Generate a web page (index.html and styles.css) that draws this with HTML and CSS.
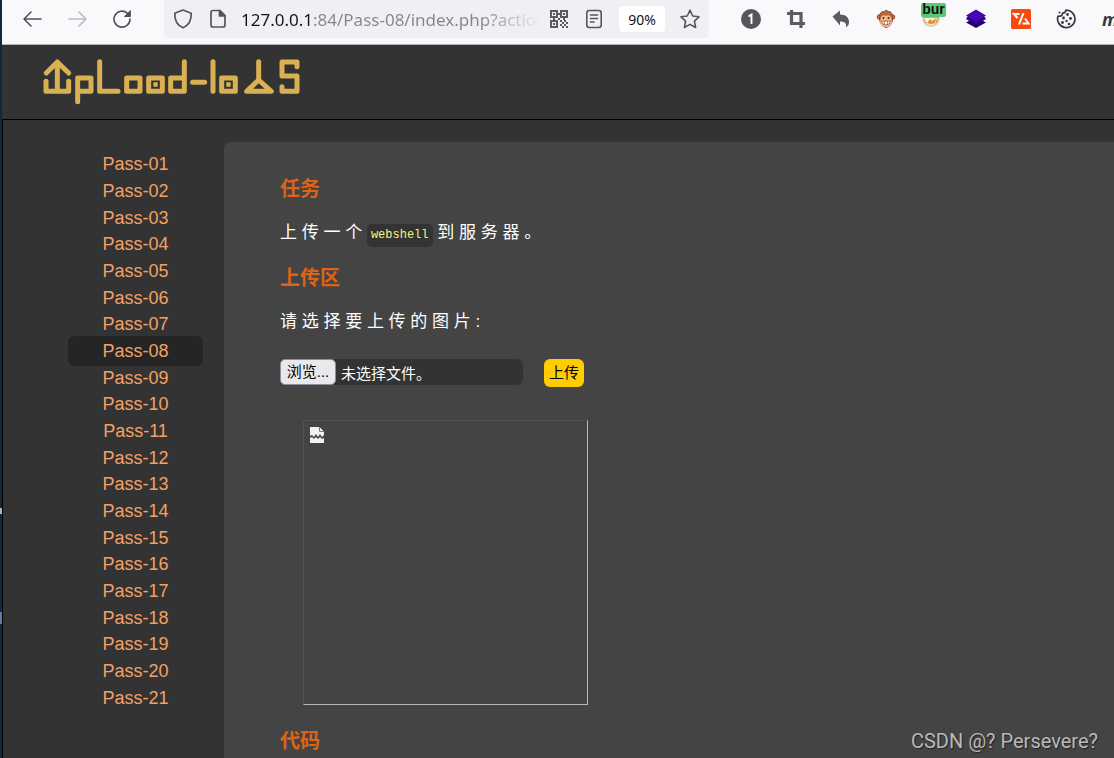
FILE: index.html
```html
<!DOCTYPE html>
<html lang="zh-CN">
<head>
<meta charset="utf-8">
<title>upload-labs</title>
<link rel="stylesheet" href="styles.css">
</head>
<body>
<div class="desktop-edge" aria-hidden="true"><span class="edge-mark edge-light"></span><span class="edge-mark edge-blue"></span></div>
<div class="window">
  <div class="toolbar">
    <div class="tool-group">
      <button class="tool" aria-label="后退"><svg width="20" height="20" viewBox="0 0 20 20" fill="none" stroke="#4f4f58" stroke-width="1.5" stroke-linecap="round" stroke-linejoin="round"><path d="M18 10H1M8 3l-7 7 7 7"/></svg></button>
      <button class="tool" aria-label="前进"><svg width="20" height="20" viewBox="0 0 20 20" fill="none" stroke="#b9b9be" stroke-width="1.5" stroke-linecap="round" stroke-linejoin="round"><path d="M1 10h17M11 3l7 7-7 7"/></svg></button>
      <button class="tool" aria-label="刷新"><svg width="20" height="20" viewBox="0 0 20 20" fill="none" stroke="#4f4f58" stroke-width="1.6" stroke-linecap="round"><path d="M17 10A8 8 0 1 1 14.500 4.300"/><path d="M17.400 2V7.500h-5.500z" fill="#4f4f58" stroke-width="1" stroke-linejoin="round"/></svg></button>
    </div>
    <div class="address">
      <svg width="20" height="20" viewBox="0 0 20 20" fill="none" stroke="#55555e" stroke-width="1.7" stroke-linejoin="round"><path d="M10 1L18.2 4.2C18.5 10.5 16.3 16 10 18.8 3.700 16 1.500 10.500 1.800 4.200z"/></svg>
      <svg width="20" height="20" viewBox="0 0 20 20" fill="none" stroke="#55555e" stroke-width="1.7" stroke-linejoin="round"><path d="M5 1.500h7l5 5v9.500q0 2-2 2H5q-2 0-2-2V3.500q0-2 2-2z"/><path d="M11.500 1.500v5.500H17z" fill="#55555e"/></svg>
      <input class="url" type="text" aria-label="地址" value="127.0.0.1:84/Pass-08/index.php?action=show_code">
      <svg width="20" height="20" viewBox="0 0 20 20" fill="#5b5b63"><path fill-rule="evenodd" d="M1 1h8v8H1zM3 3v4h4V3zM11 1h8v8h-8zM13 3v4h4V3zM1 11h8v8H1zM3 13v4h4v-4z"/><path d="M4 4h2v2H4zM14 4h2v2h-2zM4 14h2v2H4zM11 11h2v2h-2zM15 11h2v2h-2zM13 13h2v2h-2zM17 13h2v2h-2zM11 15h2v2h-2zM15 15h2v2h-2zM13 17h2v2h-2zM17 17h2v2h-2zM9 4h2v2H9zM4 9h2v2H4zM9 9h2v2H9zM14 9h2v2h-2z"/></svg>
      <svg width="20" height="20" viewBox="0 0 20 20" fill="none" stroke="#55555e" stroke-width="1.600" stroke-linecap="round"><rect x="2.800" y="1.500" width="14.400" height="17" rx="2.500"/><path d="M6.500 6h7M6.500 9.500h7M6.500 13h3.500"/></svg>
      <button class="zoom-level">90%</button>
      <button class="star" aria-label="收藏"><svg width="20" height="20" viewBox="0 0 20 20" fill="none" stroke="#55555e" stroke-width="1.600" stroke-linejoin="round"><path d="M10 1.200l2.700 5.800 6.300.8-4.600 4.400 1.200 6.300L10 15.400l-5.600 3.100 1.200-6.300L1 7.800 7.300 7z"/></svg></button>
    </div>
    <div class="tool-group extensions">
      <button class="tool" aria-label="通知"><svg width="20" height="20" viewBox="0 0 20 20"><circle cx="10" cy="10" r="10" fill="#55555e"/><path d="M7.500 7.500L10.500 5.500V15" fill="none" stroke="#fff" stroke-width="1.900"/></svg></button>
      <button class="tool" aria-label="截图"><svg width="20" height="20" viewBox="0 0 20 20" fill="none" stroke="#5b5b63" stroke-width="3.200"><path d="M1 4.500h14V15M5.500 1v13.500H19M15 12v7"/></svg></button>
      <button class="tool" aria-label="撤销"><svg width="20" height="20" viewBox="0 0 20 20" fill="#5b5b63"><path d="M1.500 7.500L9 1.500v4c6 0 9 3.500 9 7.500 0 2.500-1 4-3 5.500.8-4-1-6-6-6v4z"/></svg></button>
      <button class="tool" aria-label="脚本"><svg width="20" height="20" viewBox="0 0 20 20"><circle cx="3.500" cy="8" r="2.300" fill="#c97a50" stroke="#8c4a2b"/><circle cx="16.500" cy="8" r="2.300" fill="#c97a50" stroke="#8c4a2b"/><path d="M4 5Q5 2 8.500 2.500L10 1 12 2.500Q15.500 2 16 6q2 11-6 12.500Q2 17 4 5z" fill="#c0663c" stroke="#8c4a2b"/><path d="M5 8q2.500-3 5-1 2.500-2 5 1l1 6q-1.500 4-6 4t-6-4z" fill="#f7bd8d"/><path d="M5.500 12h9q-.5 4-4.500 4t-4.500-4z" fill="#fff" stroke="#8c4a2b" stroke-width=".8"/><path d="M8.500 12v4M11.500 12v4" stroke="#8c4a2b" stroke-width=".6"/><circle cx="7.500" cy="9" r="1" fill="#40251b"/><circle cx="12.500" cy="9" r="1" fill="#40251b"/></svg></button>
      <button class="tool badge-host" aria-label="代理 bur"><svg width="20" height="20" viewBox="0 0 20 20"><circle cx="10" cy="9" r="9" fill="#d8d0bd"/><path d="M2 7l4 1 4-2 5 2 3-2-2 8q-6 4-12 0z" fill="#e0a052"/><path d="M3 9h13l-2 6q-4 2-8 0z" fill="#fff4df"/><path d="M6 14l3-4 2 2 4-3-1 5q-4 2-8 0z" fill="#e8902f"/></svg><span class="badge">bur</span></button>
      <button class="tool" aria-label="图层"><svg width="22" height="20" viewBox="0 0 22 20"><path d="M1 13.500L11 8l10 5.500L11 19z" fill="#23006b"/><path d="M1 10l2-3h16l2 3-10 6z" fill="#31008d"/><path d="M1 6.500L11 .5l10 6-10 6z" fill="#4509b4"/></svg></button>
      <button class="tool" aria-label="代码"><svg width="20" height="20" viewBox="0 0 20 20"><rect width="20" height="20" rx="1.500" fill="#f64a0e"/><path d="M8.500 5H3l3.500 4M12.500 4L8 15.500M14 9.500l3.500 5h-6" fill="none" stroke="#fff" stroke-width="2"/></svg></button>
      <button class="tool" aria-label="Cookie"><svg width="20" height="20" viewBox="0 0 20 20"><path d="M10 1.200q-.5 3-3.500 3-.2 3.500-4.500 3A8.700 8.700 0 1 0 10 1.200z" fill="none" stroke="#38383d" stroke-width="1.700" stroke-linejoin="round"/><g fill="#38383d"><circle cx="3.500" cy="3.500" r="1"/><circle cx="11.500" cy="5.500" r="1.400"/><circle cx="7.500" cy="9" r="1.400"/><circle cx="14.500" cy="9.500" r="1.400"/><circle cx="6.500" cy="13.500" r="1.400"/><circle cx="10.500" cy="12" r="1.200"/><circle cx="13" cy="15" r="1.300"/></g></svg></button>
      <button class="tool letter" aria-label="m">m</button>
    </div>
  </div>

  <header class="site-header">
    <svg class="logo" role="img" aria-label="upload-labs" width="258" height="47" viewBox="40 25 774 141" fill="none" stroke="#d9b152" stroke-width="15" stroke-linecap="round" stroke-linejoin="round">
      <path d="M83 37V125M50 70L83 37l34 33M49 95v30h68V95"/>
      <path d="M144 156V85h40v40h-40"/>
      <path d="M210 36v89h55"/>
      <path d="M291 85h40v40h-40zM357 85h41v40h-41zM464 36v89h-41V85h41"/>
      <path d="M489 98h36M550 36v89"/>
      <path d="M576 85h41v40h-41z"/>
      <path d="M687 36v52"/>
      <path d="M651 125l36-34 38 34z"/>
      <path d="M802 51V37h-45v42h45v46h-45v-14"/>
      <path d="M371 98h13v13h-13zM590 98h13v13h-13z" fill="#d9b152" stroke="none"/>
    </svg>
  </header>

  <div class="site-body">
    <nav class="menu" aria-label="关卡">
      <ul class="menu-list">
        <li><a href="#1">Pass-01</a></li>
        <li><a href="#2">Pass-02</a></li>
        <li><a href="#3">Pass-03</a></li>
        <li><a href="#4">Pass-04</a></li>
        <li><a href="#5">Pass-05</a></li>
        <li><a href="#6">Pass-06</a></li>
        <li><a href="#7">Pass-07</a></li>
        <li class="active"><a href="#8" aria-current="page">Pass-08</a></li>
        <li><a href="#9">Pass-09</a></li>
        <li><a href="#10">Pass-10</a></li>
        <li><a href="#11">Pass-11</a></li>
        <li><a href="#12">Pass-12</a></li>
        <li><a href="#13">Pass-13</a></li>
        <li><a href="#14">Pass-14</a></li>
        <li><a href="#15">Pass-15</a></li>
        <li><a href="#16">Pass-16</a></li>
        <li><a href="#17">Pass-17</a></li>
        <li><a href="#18">Pass-18</a></li>
        <li><a href="#19">Pass-19</a></li>
        <li><a href="#20">Pass-20</a></li>
        <li><a href="#21">Pass-21</a></li>
      </ul>
    </nav>
    <main class="panel">
      <h3>任务</h3>
      <p>上 传 一 个 <code>webshell</code> 到 服 务 器 。</p>
      <h3>上传区</h3>
      <p id="upload-label">请 选 择 要 上 传 的 图 片 :</p>
      <form class="upload-form">
        <label class="file-field">
          <input class="file-input" type="file" aria-labelledby="upload-label">
          <span class="browse">浏览...</span>
          <span>未选择文件。</span>
        </label>
        <button class="submit" type="button">上传</button>
      </form>
      <div class="preview" role="img" aria-label="预览">
        <svg width="14" height="16" viewBox="0 0 14 16"><path d="M0 0h9.500L14 4.500V8l-2 2-2-3-2 3-2-3-2 3-2-2-2 1z" fill="#f2f2f2"/><path d="M9.500 0v4.500H14" fill="none" stroke="#777"/><path d="M0 11l2-1 2 2 2-2 2 2 2-2 2 2 2-1v5H0z" fill="#f2f2f2"/></svg>
      </div>
      <h3>代码</h3>
    </main>
  </div>
  <div class="watermark">CSDN @? Persevere?</div>
</div>
</body>
</html>
```
FILE: styles.css
```css
* {
  box-sizing: border-box;
}

body {
  margin: 0;
  height: 100vh;
  display: flex;
  overflow: hidden;
  background: #333;
  color: #fff;
  font-family: "Liberation Sans", "Noto Sans CJK SC", sans-serif;
}

button {
  border: 0;
  padding: 0;
  background: none;
  font: inherit;
  color: inherit;
}

svg {
  display: block;
  flex: none;
}

.desktop-edge {
  position: relative;
  flex: none;
  width: 2px;
  background: #15283b;
}

.edge-mark {
  position: absolute;
  left: 0;
  width: 2px;
}

.edge-light {
  top: 508px;
  height: 6px;
  background: #b5b5a8;
}

.edge-blue {
  top: 612px;
  height: 12px;
  background: #5f7cab;
}

.window {
  position: relative;
  flex: 1;
  min-width: 0;
  display: flex;
  flex-direction: column;
}

/* Browser toolbar */
.toolbar {
  flex: none;
  height: 45px;
  display: flex;
  padding-left: 8px;
  background: #f9f9fb;
  border-bottom: 1px solid #b8b8bc;
}

.tool-group {
  flex: none;
  display: flex;
  height: 38px;
}

.tool {
  flex: none;
  width: 45px;
  display: flex;
  align-items: center;
  justify-content: center;
}

.address {
  flex: 1;
  min-width: 0;
  height: 38px;
  margin: 0 19px;
  padding: 0 9px;
  display: flex;
  align-items: center;
  gap: 15px;
  background: #f0f0f4;
  border-radius: 0 0 4px 4px;
}

.url {
  flex: 1;
  min-width: 0;
  height: 30px;
  margin: 0 -7px 0 -2px;
  padding: 0;
  border: 0;
  outline: 0;
  font-family: "Noto Sans", sans-serif;
  font-size: 17px;
  color: transparent;
  background: linear-gradient(90deg, #15141a 73px, #85858b 73px, #85858b 240px, transparent 300px);
  -webkit-background-clip: text;
  background-clip: text;
}

.zoom-level {
  width: 46px;
  height: 26px;
  border-radius: 4px;
  background: #fff;
  color: #15141a;
  font-family: "Noto Sans", sans-serif;
  font-size: 14px;
}

.extensions {
  width: 386px;
  overflow: hidden;
}

.badge-host {
  position: relative;
}

.badge {
  position: absolute;
  top: 3px;
  right: 7px;
  width: 25px;
  height: 14px;
  border-radius: 2px;
  background: #5ec773;
  color: #111;
  font-size: 14px;
  font-weight: 700;
  line-height: 13px;
}

.letter {
  padding-left: 14px;
  justify-content: flex-start;
  color: #38383d;
  font-family: "Noto Sans", sans-serif;
  font-size: 18px;
  font-style: italic;
  font-weight: 700;
  line-height: 18px;
}

/* Site */
.site-header {
  flex: none;
  padding: 13px 41px 14px;
}

.site-body {
  flex: 1;
  min-height: 0;
  display: flex;
  border-top: 1px solid #000;
  border-left: 1px solid #000;
}

.menu {
  flex: none;
  display: flex;
  padding: 31px 21px 47px 65px;
}

.menu-list {
  width: 135px;
  margin: 0;
  padding: 0;
  list-style: none;
  display: grid;
  grid-template-rows: repeat(21, 1fr);
}

.menu-list li {
  min-height: 0;
  display: flex;
  align-items: center;
  justify-content: center;
  font-size: 18px;
  line-height: 22px;
}

.menu-list .active {
  margin: -2px 0;
  border-radius: 6px;
  background: #252525;
}

.menu-list a {
  color: #f4a064;
  text-decoration: none;
}

.panel {
  flex: 1;
  min-width: 0;
  margin-top: 22px;
  padding: 33px 56px 0;
  overflow: hidden;
  background: #444;
  border-top-left-radius: 6px;
}

.panel h3 {
  margin: 0 0 15px;
  color: #dd6414;
  font-size: 20px;
  line-height: 29px;
}

.panel p {
  margin: 0 0 17px;
  font-size: 17px;
  line-height: 28px;
}

.panel code {
  display: inline-block;
  padding: 0 4px;
  border-radius: 5px;
  background: #333;
  color: #f5f57a;
  font-family: "Liberation Mono", monospace;
  font-size: 12px;
  line-height: 23px;
}

.upload-form {
  display: flex;
  align-items: flex-start;
  gap: 21px;
  margin-top: 23px;
}

.file-field {
  position: relative;
  width: 243px;
  height: 26px;
  display: flex;
  align-items: center;
  gap: 5px;
  border-radius: 6px;
  background: #333;
  font-size: 15px;
}

.file-input {
  position: absolute;
  inset: 0;
  width: 100%;
  opacity: 0;
}

.browse {
  width: 56px;
  height: 26px;
  border: 1px solid #8f8f9d;
  border-radius: 5px;
  background: #e9e9ed;
  color: #000;
  line-height: 24px;
  text-align: center;
}

.submit {
  padding: 0 5px;
  border-radius: 6px;
  background: #ffcc00;
  color: #000;
  font-size: 15px;
  line-height: 28px;
}

.preview {
  width: 285px;
  height: 285px;
  margin: 33px 0 22px 23px;
  padding: 6px;
  border: 1px solid #505050;
  border-right-color: #b8b8b8;
  border-bottom-color: #b8b8b8;
}

.watermark {
  position: absolute;
  right: 16px;
  bottom: 5px;
  color: #b9b9b9;
  font-family: Roboto, sans-serif;
  font-size: 20px;
  line-height: 24px;
  text-shadow: 1px 1px 1px #222;
}
```
